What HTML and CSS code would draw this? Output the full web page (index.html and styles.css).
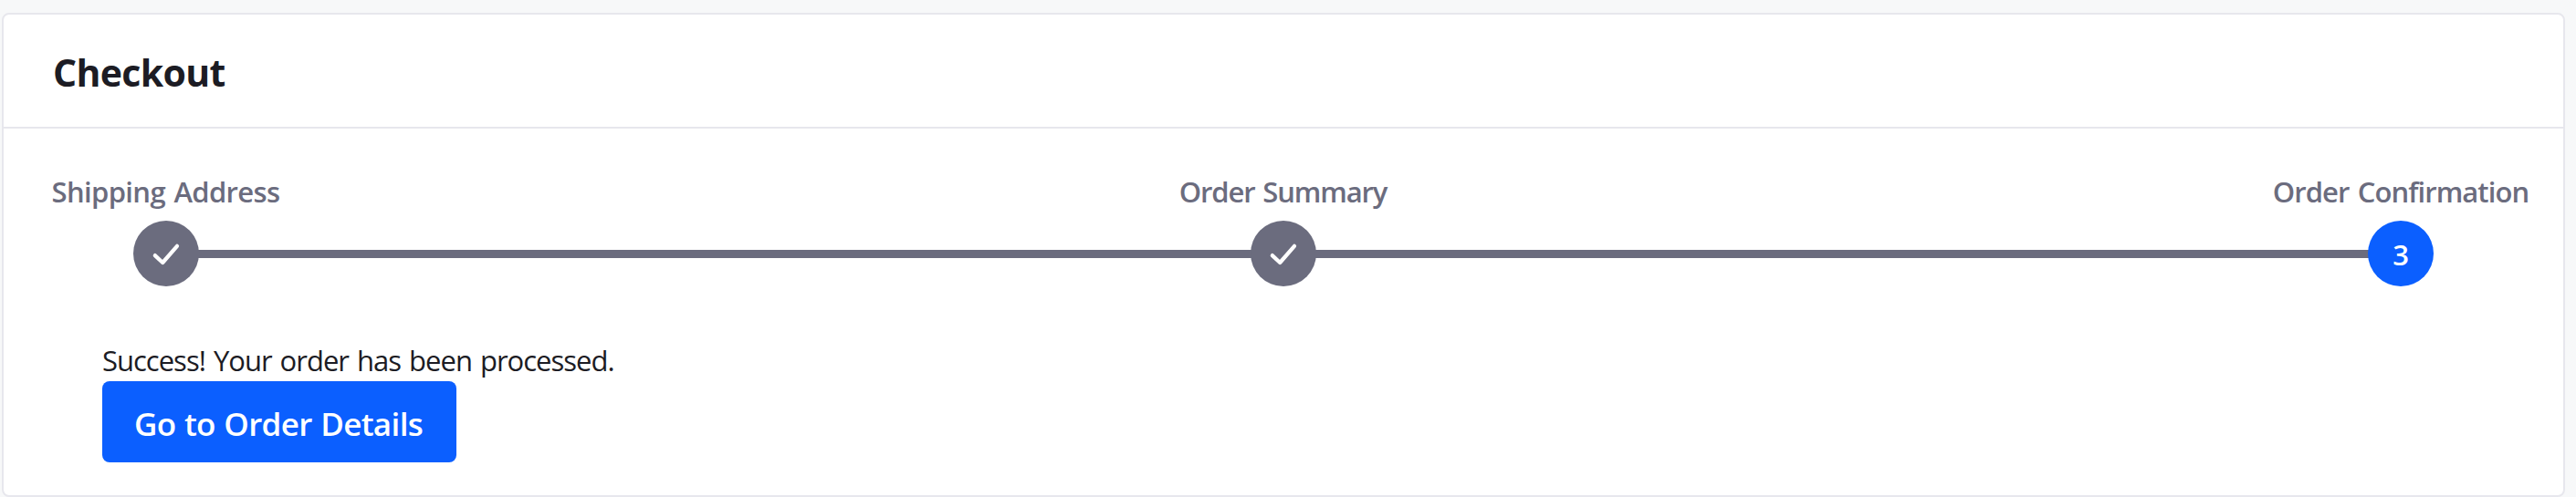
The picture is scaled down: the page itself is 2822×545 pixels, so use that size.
FILE: index.html
```
<!DOCTYPE html>
<html lang="en">
<head>
<meta charset="utf-8">
<title>Checkout</title>
<link rel="stylesheet" href="styles.css">
</head>
<body>
<main class="card">
  <header class="card-header">
    <h1 class="card-title">Checkout</h1>
  </header>
  <section class="card-body">
    <div class="step-labels">
      <span class="step-label label-shipping">Shipping Address</span>
      <span class="step-label label-summary">Order Summary</span>
      <span class="step-label label-confirmation">Order Confirmation</span>
    </div>
    <div class="step-track">
      <span class="step-dot">
        <svg class="check" viewBox="0 0 72 72"><path d="M23.8 38.1 32.2 46 48 27.8"/></svg>
      </span>
      <span class="step-line"></span>
      <span class="step-dot">
        <svg class="check" viewBox="0 0 72 72"><path d="M23.8 38.1 32.2 46 48 27.8"/></svg>
      </span>
      <span class="step-line"></span>
      <span class="step-dot active">3</span>
    </div>
    <div class="result">
      <p class="message">Success! Your order has been processed.</p>
      <button class="button" type="button">Go to Order Details</button>
    </div>
  </section>
</main>
</body>
</html>
```
FILE: styles.css
```
* {
  box-sizing: border-box;
}

body {
  margin: 0;
  padding: 14px 12px 0 2px;
  background: #f7f8f9;
  color: #1c1c24;
  font-family: "Open Sans", "Noto Sans", sans-serif;
}

.card {
  height: 531px;
  background: #fff;
  border: 2px solid #e7e7ed;
  border-radius: 8px;
}

.card-header {
  padding: 32px 54px 29px;
  border-bottom: 2px solid #e7e7ed;
}

.card-title {
  margin: 0;
  font-size: 41px;
  font-weight: 700;
  line-height: 62px;
  letter-spacing: -0.65px;
}

.card-body {
  padding-top: 45px;
}

.step-labels {
  display: flex;
  justify-content: space-between;
  padding: 0 36px;
}

.step-label {
  width: 284px;
  color: #6b6c7e;
  font-size: 31px;
  font-weight: 600;
  line-height: 48px;
  text-align: center;
  white-space: nowrap;
  word-spacing: 2px;
}

.label-shipping {
  padding-right: 1px;
  letter-spacing: -0.63px;
}

.label-summary {
  padding-right: 1px;
  letter-spacing: -1.14px;
}

.label-confirmation {
  letter-spacing: -0.92px;
}

.step-track {
  display: flex;
  align-items: center;
  margin-top: 8px;
  padding: 0 142px;
}

.step-dot {
  display: flex;
  flex: none;
  align-items: center;
  justify-content: center;
  width: 72px;
  height: 72px;
  border-radius: 50%;
  background: #6b6c7e;
  color: #fff;
  font-size: 31px;
  font-weight: 600;
}

.step-dot.active {
  padding-top: 1px;
  background: #0b5fff;
}

.step-line {
  flex: 1;
  height: 9px;
  margin: 1px -1px 0;
  background: #6b6c7e;
}

.check {
  width: 72px;
  height: 72px;
  fill: none;
  stroke: #fff;
  stroke-width: 4.2;
  stroke-linecap: round;
  stroke-linejoin: round;
}

.result {
  display: flex;
  flex-direction: column;
  align-items: flex-start;
  margin-top: 58px;
  padding-left: 108px;
}

.message {
  margin: 0;
  font-size: 31px;
  line-height: 46px;
  letter-spacing: -1px;
  word-spacing: 2px;
}

.button {
  width: 388px;
  height: 89px;
  padding: 4px 0 0 35px;
  border: 0;
  border-radius: 8px;
  background: #0b5fff;
  color: #fff;
  font: 600 35px/85px "Open Sans", "Noto Sans", sans-serif;
  letter-spacing: -0.65px;
  word-spacing: 1px;
  text-align: left;
  white-space: nowrap;
}
```
